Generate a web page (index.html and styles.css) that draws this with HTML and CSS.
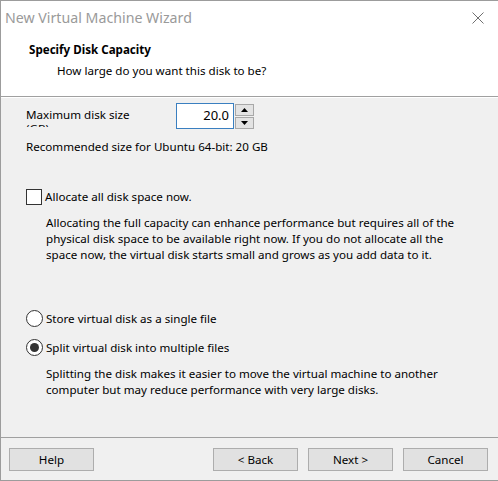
FILE: index.html
```html
<!DOCTYPE html>
<html>
<head>
<meta charset="utf-8">
<link rel="stylesheet" href="styles.css">
</head>
<body>
<div class="window">
  <div class="titlebar">
    <span class="title">New Virtual Machine Wizard</span>
    <svg class="close" width="12" height="12" viewBox="0 0 12 12"><path d="M0.5 0.5 L11.5 11.5 M11.5 0.5 L0.5 11.5" stroke="#707070" stroke-width="1" fill="none"/></svg>
  </div>
  <div class="header">
    <div class="h-title">Specify Disk Capacity</div>
    <div class="h-sub">How large do you want this disk to be?</div>
  </div>
  <div class="content">
    <div class="size-row">
      <div class="size-label"><span>Maximum disk size</span><span class="clip">(GB):</span></div>
      <div class="spin">
        <div class="spin-input">20.0</div>
        <div class="spin-btns">
          <div class="spin-btn"><svg width="7" height="4" viewBox="0 0 7 4"><path d="M0 4 L3.5 0 L7 4 Z" fill="#000"/></svg></div>
          <div class="spin-btn"><svg width="7" height="4" viewBox="0 0 7 4"><path d="M0 0 L3.5 4 L7 0 Z" fill="#000"/></svg></div>
        </div>
      </div>
    </div>
    <div class="rec">Recommended size for Ubuntu 64-bit: 20 GB</div>
    <div class="option alloc"><span class="checkbox"></span><span>Allocate all disk space now.</span></div>
    <p class="desc">Allocating the full capacity can enhance performance but requires all of the physical disk space to be available right now. If you do not allocate all the space now, the virtual disk starts small and grows as you add data to it.</p>
    <div class="option single"><span class="radio"></span><span>Store virtual disk as a single file</span></div>
    <div class="option split"><span class="radio checked"></span><span>Split virtual disk into multiple files</span></div>
    <p class="desc">Splitting the disk makes it easier to move the virtual machine to another computer but may reduce performance with very large disks.</p>
  </div>
  <div class="footer">
    <button class="btn">Help</button>
    <div class="spacer"></div>
    <button class="btn">&lt; Back</button>
    <button class="btn">Next &gt;</button>
    <button class="btn">Cancel</button>
  </div>
</div>
</body>
</html>
```
FILE: styles.css
```css
* { box-sizing: border-box; }
html, body { margin: 0; padding: 0; background: #f0f0f0; }
body {
  font-family: "Noto Sans", "Open Sans", sans-serif;
  font-size: 11.6px;
  color: #000;
}
.window {
  width: 498px;
  height: 481px;
  border-top: 1px solid #9c9c9c;
  border-left: 1px solid #9c9c9c;
  border-bottom: 1px solid #9c9c9c;
  display: flex;
  flex-direction: column;
  background: #f0f0f0;
  overflow: hidden;
}
.titlebar {
  height: 33px;
  background: #fff;
  display: flex;
  align-items: center;
  padding-left: 4px;
  padding-right: 14px;
}
.title {
  font-size: 14.2px;
  color: #9a9a9a;
  flex: 1;
}
.close { display: block; }
.header {
  background: #fff;
  height: 63px;
  padding-left: 28px;
  padding-top: 7px;
  border-bottom: 1px solid #a0a0a0;
  box-shadow: 0 1px 0 #fff;
}
.h-title { font-weight: bold; line-height: 17px; }
.h-sub { padding-left: 28px; line-height: 17px; margin-top: 4px; }
.content {
  flex: 1;
  padding: 6px 0 0 25px;
}
.size-row { display: flex; align-items: flex-start; height: 26px; }
.size-label {
  width: 150px;
  height: 24px;
  overflow: hidden;
  display: flex;
  flex-direction: column;
  padding-top: 5px;
  line-height: 14px;
}
.spin { display: flex; height: 26px; }
.spin-input {
  width: 58px;
  height: 26px;
  background: #fff;
  border: 1px solid #3a7fc0;
  text-align: right;
  padding-right: 4px;
  line-height: 23px;
  font-size: 13px;
}
.spin-btns { display: flex; flex-direction: column; margin-left: 1px; width: 19px; gap: 1px; padding-top: 1px; }
.spin-btn {
  flex: 1;
  background: #e3e3e3;
  border: 1px solid #a8a8a8;
  display: flex;
  align-items: center;
  justify-content: center;
}
.spin-btn svg { display: block; }
.rec { margin-top: 10px; line-height: 15px; }
.option { display: flex; align-items: center; height: 17px; }
.option > span:last-child { margin-left: 3px; }
.alloc { margin-top: 34px; }
.checkbox {
  width: 16px;
  height: 16px;
  border: 1px solid #333;
  background: #fff;
}
.radio {
  width: 17px;
  height: 17px;
  border: 1px solid #333;
  border-radius: 50%;
  background: #fff;
  position: relative;
}
.radio.checked::after {
  content: "";
  position: absolute;
  left: 3px; top: 3px;
  width: 9px; height: 9px;
  border-radius: 50%;
  background: #333;
}
.desc {
  margin: 10px 0 0 20px;
  width: 420px;
  line-height: 16px;
}
.single { margin-top: 47px; }
.split { margin-top: 12px; }
.footer {
  height: 43px;
  flex: none;
  border-top: 1px solid #a0a0a0;
  display: flex;
  align-items: flex-start;
  padding: 10px 10px 0 8px;
  gap: 10px;
}
.spacer { flex: 1; }
.btn {
  width: 85px;
  height: 23px;
  background: #e1e1e1;
  border: 1px solid #adadad;
  font-family: inherit;
  font-size: 11.6px;
  color: #000;
  padding: 0;
  margin: 0;
}
```
